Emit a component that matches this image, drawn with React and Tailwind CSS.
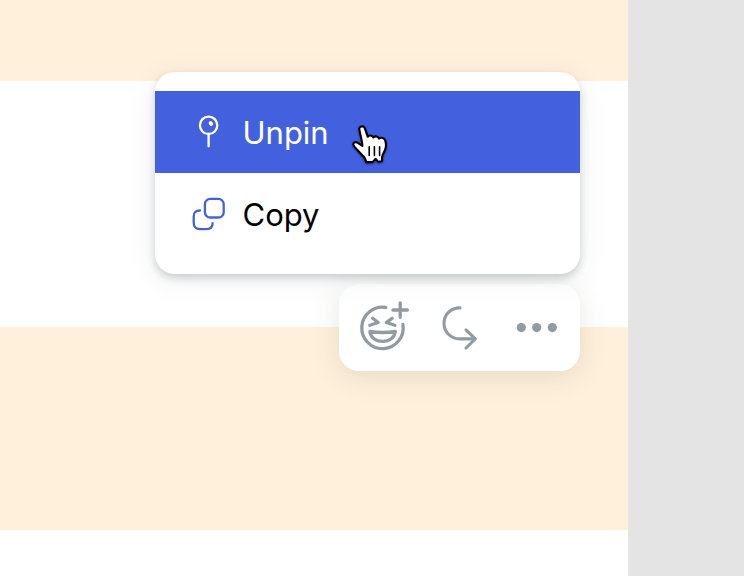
function PinIcon() {
  return (
    <svg width="36" height="36" viewBox="0 -0.9 36 36" fill="none" stroke="currentColor" strokeWidth="2.3" strokeLinecap="round">
      <circle cx="17.6" cy="10.4" r="8.7" />
      <path d="M17.6 19v12.4" />
      <ellipse cx="19.9" cy="8.6" rx="2" ry="2.5" transform="rotate(-38 19.9 8.6)" fill="currentColor" stroke="none" />
    </svg>
  );
}

function CopyIcon() {
  return (
    <svg width="36" height="36" viewBox="0.1 -0.7 36 36" fill="none" stroke="currentColor" strokeWidth="2.3" strokeLinecap="round">
      <rect x="14" y="2.2" width="18.8" height="18.6" rx="5.3" />
      <path d="M9.1 13.8C4.7 13.8 2.8 15.8 2.8 19.8v6c0 4.8 1.8 6.6 6.6 6.6h5.8c4.8 0 6.5-1.8 6.5-5.9" />
    </svg>
  );
}

function ReactIcon() {
  return (
    <svg width="56" height="56" viewBox="356 299.5 56 56" fill="none" stroke="currentColor" strokeWidth="3.3" strokeLinecap="round" strokeLinejoin="round">
      <path d="M385.8 307A20.7 20.7 0 1 0 402.9 324" />
      <path d="M400.2 302.4v14.4M393 309.5h14.4" />
      <path d="M372.6 317.8l5.6 4.2-8.4 2.8M392.1 317.8l-5.8 4.2 8.6 2.8" />
      <path d="M369.9 331c7.6 1.2 17.8 1.2 25.4 0-.7 6.2-5.9 9.9-12.7 9.9s-12-3.7-12.7-9.9z" />
    </svg>
  );
}

function ReplyIcon() {
  return (
    <svg width="42" height="50" viewBox="439 302.5 42 50" fill="none" stroke="currentColor" strokeWidth="3.1" strokeLinecap="round" strokeLinejoin="round">
      <path d="M460 307.4c-9.4 0-16 6.8-16 15.4 0 8.5 6.6 15.6 15.6 15.6H475" />
      <path d="M466 329.3l9.3 9.1-9.3 9.1" />
    </svg>
  );
}

function MoreIcon() {
  return (
    <svg width="44" height="12" viewBox="0 0.7 44 12" fill="currentColor">
      <circle cx="6.3" cy="6.3" r="4.6" />
      <circle cx="21.7" cy="6.3" r="4.6" />
      <circle cx="37.3" cy="6.3" r="4.6" />
    </svg>
  );
}

function HandCursor() {
  return (
    <svg className="absolute left-[348px] top-[119px]" width="48" height="52" viewBox="7.6 3.6 48 52">
      <g strokeLinejoin="round" strokeLinecap="round">
        <path
          d="M18.9 13.8C18.2 11.4 22.9 9.5 24.5 12.9L27.3 21.3C29 19.4 32 19.9 32.8 22C34.8 20.2 38 21 38.5 23.2C40.6 21.6 44.2 22.5 44.9 25.3C45.7 28.6 46.4 30.8 44.6 34.6C43.4 37.6 41.7 39.8 41.7 41.5L41.6 45.9L37.6 46.3L35.2 43.4L32.3 46.7H25.6C25.5 43.6 24.4 41.8 21.9 39.9C19 36.8 16.7 34.1 14 31.2C10.8 27.6 15.1 25.3 18.3 28L22 30.6C22 25.5 19.7 19.7 18.9 13.8Z"
          fill="#fff"
          stroke="#000"
          strokeWidth="2.1"
          className="drop-shadow-[0_1px_1px_rgba(0,0,0,0.4)]"
        />
        <path d="M28.8 31.4v8.6M34 31.4v8.6M39.2 31.4v8.6" stroke="#000" strokeWidth="1.6" fill="none" />
      </g>
    </svg>
  );
}

export default function App() {
  return (
    <div className="relative flex h-[576px] w-[744px] overflow-hidden bg-white font-['Inter',sans-serif]">
      <main className="flex w-[628px] flex-col">
        <div className="h-[81px] bg-[#fff0dc]" />
        <div className="h-[246px] bg-white" />
        <div className="h-[203px] bg-[#fff0dc]" />
        <div className="flex-1 bg-white" />
      </main>
      <aside className="flex-1 border-l border-[#e9e7e5] bg-[#e4e4e4]" />

      <div className="absolute left-[339px] top-[284px] flex h-[87px] w-[241px] items-center rounded-[20px] bg-white pl-[17px] text-[#929ba2] shadow-[0_6px_28px_rgba(60,85,40,0.13)]">
        <button aria-label="React"><ReactIcon /></button>
        <button aria-label="Reply" className="ml-[27px]"><ReplyIcon /></button>
        <button aria-label="More" className="ml-[34px]"><MoreIcon /></button>
      </div>

      <div className="absolute left-[155px] top-[71.5px] flex h-[202.5px] w-[425px] flex-col rounded-[20px] bg-white pt-[19.5px] text-[31px] shadow-[0_4px_8px_rgba(45,60,75,0.22),0_6px_32px_rgba(45,75,65,0.07)]">
        <button className="flex h-[82px] items-center bg-[#4361de] pl-9 text-white">
          <PinIcon />
          <span className="ml-[15.5px] pt-[3px]">Unpin</span>
        </button>
        <button className="flex h-[82px] items-center pl-9 text-[#4361de]">
          <CopyIcon />
          <span className="ml-[15.5px] pt-[3px] text-black">Copy</span>
        </button>
      </div>
      <HandCursor />
    </div>
  );
}
